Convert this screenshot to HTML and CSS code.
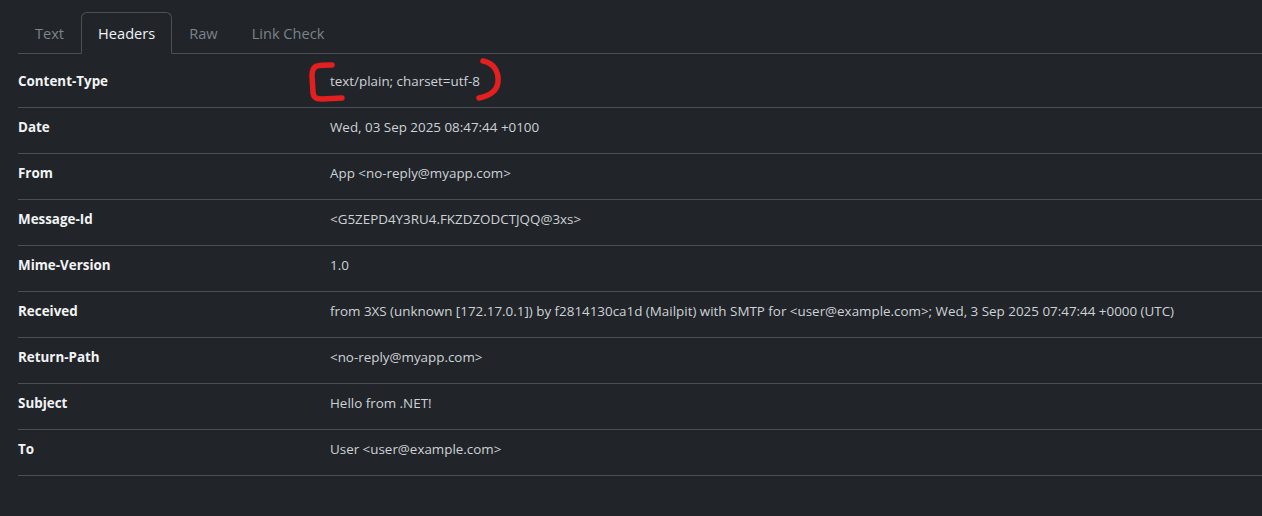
FILE: index.html
```html
<!DOCTYPE html>
<html lang="en">
<head>
<meta charset="utf-8">
<title>Headers</title>
<link rel="stylesheet" href="styles.css">
</head>
<body>
<div class="page">
  <ul class="tabs">
    <li class="tab">Text</li>
    <li class="tab active">Headers</li>
    <li class="tab">Raw</li>
    <li class="tab">Link Check</li>
  </ul>
  <div class="tab-content">
    <table class="headers">
      <tbody>
        <tr><th>Content-Type</th><td>text/plain; charset=utf-8</td></tr>
        <tr><th>Date</th><td>Wed, 03 Sep 2025 08:47:44 +0100</td></tr>
        <tr><th>From</th><td>App &lt;no-reply@myapp.com&gt;</td></tr>
        <tr><th>Message-Id</th><td>&lt;G5ZEPD4Y3RU4.FKZDZODCTJQQ@3xs&gt;</td></tr>
        <tr><th>Mime-Version</th><td>1.0</td></tr>
        <tr><th>Received</th><td>from 3XS (unknown [172.17.0.1]) by f2814130ca1d (Mailpit) with SMTP for &lt;user@example.com&gt;; Wed, 3 Sep 2025 07:47:44 +0000 (UTC)</td></tr>
        <tr><th>Return-Path</th><td>&lt;no-reply@myapp.com&gt;</td></tr>
        <tr><th>Subject</th><td>Hello from .NET!</td></tr>
        <tr><th>To</th><td>User &lt;user@example.com&gt;</td></tr>
      </tbody>
    </table>
  </div>
</div>
<svg class="annotation" width="1262" height="516" viewBox="0 0 1262 516" aria-hidden="true">
  <path d="M332 65 C 326 65, 320 65, 317 66 C 313 67, 312 71, 312 76 L 313 92 C 313 97, 316 99, 322 99 L 342 98" />
  <path d="M483 61 C 494 63, 499 72, 498 82 C 497 91, 489 96, 479 98" />
</svg>
</body>
</html>
```
FILE: styles.css
```css
* { box-sizing: border-box; }

body {
  margin: 0;
  background: #212529;
  color: #dee2e6;
  font-family: "Open Sans", "Noto Sans", sans-serif;
  font-size: 13.4px;
  line-height: 1.5;
}

.page {
  padding-left: 18px;
}

.tabs {
  list-style: none;
  margin: 12px 0 0;
  padding: 0;
  display: flex;
  border-bottom: 1px solid #495057;
}

.tab {
  font-size: 14.6px;
  line-height: 24px;
  padding: 8px 16px;
  border: 1px solid transparent;
  border-radius: 6px 6px 0 0;
  margin-bottom: -1px;
  color: #7b838b;
}

.tab.active {
  color: #f1f3f5;
  background: #212529;
  border-color: #495057 #495057 #212529;
}

.tab-content {
  padding-top: 8px;
}

.headers {
  width: 100%;
  border-collapse: collapse;
}

.headers th,
.headers td {
  padding: 9px 0 15px;
  text-align: left;
  vertical-align: top;
  border-bottom: 1px solid #495057;
  line-height: 21px;
}

.headers th {
  width: 312px;
  font-weight: 700;
  color: #f1f3f5;
}

.headers td {
  color: #ced2d6;
}

.annotation {
  position: absolute;
  top: 0;
  left: 0;
  pointer-events: none;
}

.annotation path {
  fill: none;
  stroke: #e41f1f;
  stroke-width: 5.5;
  stroke-linecap: round;
  stroke-linejoin: round;
}
```
